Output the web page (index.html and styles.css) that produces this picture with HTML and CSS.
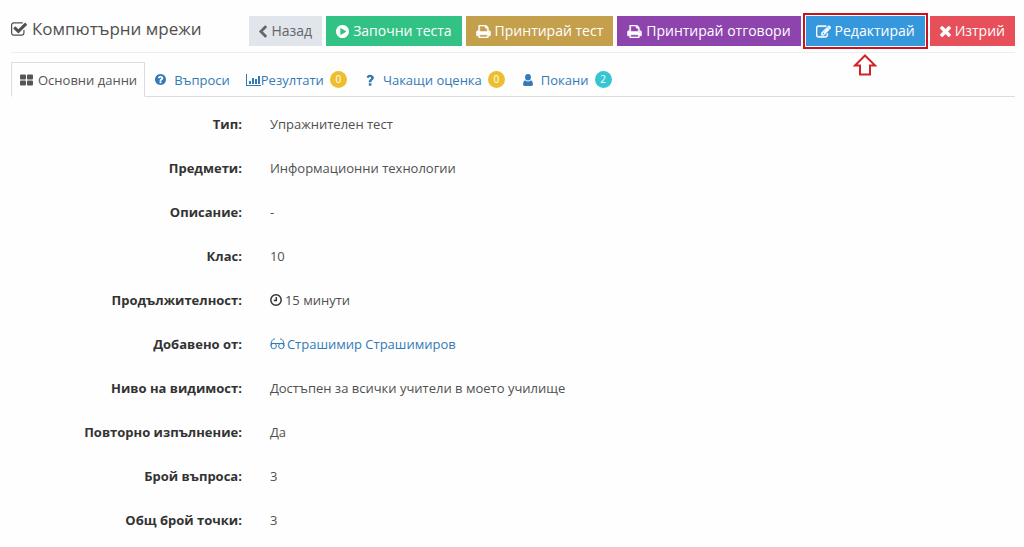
FILE: index.html
```html
<!DOCTYPE html>
<html lang="bg">
<head>
<meta charset="utf-8">
<title>Компютърни мрежи</title>
<link rel="stylesheet" href="styles.css">
</head>
<body>
<svg class="sprite" aria-hidden="true">
  <symbol id="print" viewBox="64 128 1664 1536"><path d="M448 1536h896v-256h-896v256zm0-640h896v-384h-160q-40 0-68-28t-28-68v-160h-640v640zm1152 64q0-26-19-45t-45-19-45 19-19 45 19 45 45 19 45-19 19-45zm128 0v416q0 13-9.500 22.500t-22.500 9.500h-224v160q0 40-28 68t-68 28h-960q-40 0-68-28t-28-68v-160h-224q-13 0-22.500-9.500t-9.500-22.500v-416q0-79 56.500-135.500t135.500-56.500h64v-544q0-40 28-68t68-28h672q40 0 88 20t76 48l152 152q28 28 48 76t20 88v256h64q79 0 135.500 56.500t56.500 135.500z"/></symbol>
</svg>
<main class="page">
  <header class="header">
    <h1 class="title">
      <svg class="icon icon-title" viewBox="64 128 1664 1408" aria-hidden="true"><path d="M1472 930v318q0 119-84.500 203.500t-203.500 84.500h-832q-119 0-203.500-84.500t-84.500-203.500v-832q0-119 84.500-203.500t203.500-84.500h832q63 0 117 25 15 7 18 23 3 17-9 29l-49 49q-10 10-23 10-3 0-9-2-23-6-45-6h-832q-66 0-113 47t-47 113v832q0 66 47 113t113 47h832q66 0 113-47t47-113v-254q0-13 9-22l64-64q10-10 23-10 6 0 12 3 20 8 20 29zm231-489l-814 814q-24 24-57 24t-57-24l-430-430q-24-24-24-57t24-57l110-110q24-24 57-24t57 24l263 263 647-647q24-24 57-24t57 24l110 110q24 24 24 57t-24 57z"/></svg>
      Компютърни мрежи
    </h1>
    <div class="actions">
      <button type="button" class="btn btn-back"><svg class="icon icon-narrow" viewBox="410 26 1036 1612" aria-hidden="true"><path d="M1427 301l-531 531 531 531q19 19 19 45t-19 45l-166 166q-19 19-45 19t-45-19l-742-742q-19-19-19-45t19-45l742-742q19-19 45-19t45 19l166 166q19 19 19 45t-19 45z"/></svg>Назад</button>
      <button type="button" class="btn btn-start"><svg class="icon" viewBox="128 128 1536 1536" aria-hidden="true"><path d="M896 128q209 0 385.500 103t279.500 279.500 103 385.500-103 385.500-279.500 279.500-385.500 103-385.500-103-279.500-279.500-103-385.500 103-385.500 279.500-279.500 385.500-103zm384 823q32-18 32-55t-32-55l-544-320q-31-19-64-1-32 19-32 56v640q0 37 32 56 16 8 32 8 17 0 32-9z"/></svg>Започни теста</button>
      <button type="button" class="btn btn-print"><svg class="icon icon-wide icon-bold" aria-hidden="true"><use href="#print"/></svg>Принтирай тест</button>
      <button type="button" class="btn btn-answers"><svg class="icon icon-wide icon-bold" aria-hidden="true"><use href="#print"/></svg>Принтирай отговори</button>
      <div class="highlight">
        <button type="button" class="btn btn-edit"><svg class="icon icon-wide icon-bold" viewBox="0 128 1784 1408" aria-hidden="true"><path d="M888 1184l116-116-152-152-116 116v56h96v96h56zm440-720q-16-16-33 1l-350 350q-17 17-1 33t33-1l350-350q17-17 1-33zm80 594v190q0 119-84.500 203.500t-203.500 84.500h-832q-119 0-203.500-84.500t-84.500-203.500v-832q0-119 84.500-203.500t203.500-84.500h832q63 0 117 25 15 7 18 23 3 17-9 29l-49 49q-14 14-32 8-23-6-45-6h-832q-66 0-113 47t-47 113v832q0 66 47 113t113 47h832q66 0 113-47t47-113v-126q0-13 9-22l64-64q15-15 35-7t20 29zm-96-738l288 288-672 672h-288v-288zm444 132l-92 92-288-288 92-92q28-28 68-28t68 28l152 152q28 28 28 68t-28 68z"/></svg>Редактирай</button>
        <svg class="pointer" viewBox="0 0 24 22" aria-hidden="true"><path d="M12 1.500 22 11.500H17V20.500H7V11.500H2Z"/></svg>
      </div>
      <button type="button" class="btn btn-delete"><svg class="icon icon-cross" viewBox="302 366 1188 1188" aria-hidden="true"><path d="M1490 1322q0 40-28 68l-136 136q-28 28-68 28t-68-28l-294-294-294 294q-28 28-68 28t-68-28l-136-136q-28-28-28-68t28-68l294-294-294-294q-28-28-28-68t28-68l136-136q28-28 68-28t68 28l294 294 294-294q28-28 68-28t68 28l136 136q28 28 28 68t-28 68l-294 294 294 294q28 28 28 68z"/></svg>Изтрий</button>
    </div>
  </header>

  <nav class="tabs">
    <a class="tab active" href="#main" aria-current="page"><svg class="icon" viewBox="0 0 13 12" aria-hidden="true"><rect y="1" width="6" height="5" rx="1"/><rect x="7" y="1" width="6" height="5" rx="1"/><rect y="7" width="6" height="5" rx="1"/><rect x="7" y="7" width="6" height="5" rx="1"/></svg>Основни данни</a>
    <a class="tab" href="#questions"><svg class="icon icon-help" viewBox="128 128 1536 1536" aria-hidden="true"><path d="M1024 1376v-192q0-14-9-23t-23-9h-192q-14 0-23 9t-9 23v192q0 14 9 23t23 9h192q14 0 23-9t9-23zm256-672q0-88-55.500-163t-138.500-116-170-41q-243 0-371 213-15 24 8 42l132 100q7 6 19 6 16 0 25-12 53-68 86-92 34-24 86-24 48 0 85.500 26t37.500 59q0 38-20 61t-68 45q-63 28-115.500 86.500t-52.500 125.500v36q0 14 9 23t23 9h192q14 0 23-9t9-23q0-19 21.500-49.500t54.500-49.500q32-18 49-28.500t46-35 44.500-48 28-60.500 12.500-81zm384 192q0 209-103 385.500t-279.500 279.500-385.500 103-385.500-103-279.500-279.500-103-385.500 103-385.500 279.500-279.500 385.500-103 385.500 103 279.500 279.500 103 385.500z"/></svg>Въпроси</a>
    <a class="tab tab-tight" href="#results"><svg class="icon icon-chart" viewBox="0 0 15 12" aria-hidden="true"><path d="M0 0h1v11h14v1H0zM3 7h2v3H3zM6 4h2v6H6zM9 5h2v5H9zM12 2h2v8h-2z"/></svg>Резултати<span class="badge">0</span></a>
    <a class="tab" href="#pending"><svg class="icon icon-question" viewBox="0 0 10 12" aria-hidden="true"><path d="M1.500 3.200C2.200 1.500 3.500.7 5.100.7 7.200.7 8.900 2 8.900 3.800 8.900 6 6.400 6.200 6.400 7.700V8.200H3.800V7.400C3.800 5.300 6.100 5.100 6.100 3.900 6.100 3.300 5.600 2.900 5 2.900 4.300 2.900 3.900 3.300 3.400 4.300ZM3.800 9.200H6.400V11.700H3.800Z"/></svg>Чакащи оценка<span class="badge">0</span></a>
    <a class="tab" href="#invites"><svg class="icon icon-user" viewBox="0 0 10 12" aria-hidden="true"><ellipse cx="5" cy="3.300" rx="2.900" ry="3.300"/><path d="M2 6.200Q5 8.800 8 6.200 10 7 10 10.300 10 12 8.300 12H1.700Q0 12 0 10.300 0 7 2 6.200Z"/></svg>Покани<span class="badge badge-info">2</span></a>
  </nav>

  <dl class="details">
    <dt>Тип:</dt><dd>Упражнителен тест</dd>
    <dt>Предмети:</dt><dd>Информационни технологии</dd>
    <dt>Описание:</dt><dd>-</dd>
    <dt>Клас:</dt><dd>10</dd>
    <dt>Продължителност:</dt><dd><svg class="icon icon-clock" viewBox="0 0 12 12" aria-hidden="true"><path d="M6 .8a5.200 5.200 0 1 0 0 10.400A5.200 5.200 0 0 0 6 .8ZM6.300 3v3.500H3.800"/></svg>15 минути</dd>
    <dt>Добавено от:</dt><dd><a class="link" href="#author"><svg class="icon icon-glasses" viewBox="0 0 15 12" aria-hidden="true"><path d="M5 1C2 1 1 3.500 1 8M10 1c3 0 4 2.500 4 7M1 5.500h13"/><circle cx="3.700" cy="8" r="2.700"/><circle cx="11.300" cy="8" r="2.700"/></svg>Страшимир Страшимиров</a></dd>
    <dt>Ниво на видимост:</dt><dd>Достъпен за всички учители в моето училище</dd>
    <dt>Повторно изпълнение:</dt><dd>Да</dd>
    <dt>Брой въпроса:</dt><dd>3</dd>
    <dt>Общ брой точки:</dt><dd>3</dd>
  </dl>
</main>
</body>
</html>
```
FILE: styles.css
```css
* {
  box-sizing: border-box;
}

body {
  margin: 0;
  background: #fefefe;
  color: #505050;
  font-family: "Open Sans", "Noto Sans", sans-serif;
  font-size: 13px;
  line-height: 20px;
}

.sprite {
  display: none;
}

.page {
  padding: 16px 9px 0 11px;
}

.header {
  display: flex;
  justify-content: space-between;
  align-items: flex-start;
  padding-bottom: 6px;
  border-bottom: 1px solid #eeeeee;
}

.title {
  display: flex;
  align-items: center;
  gap: 5px;
  margin: 0;
  font-size: 17px;
  font-weight: 400;
  line-height: 26px;
  white-space: nowrap;
}

.icon {
  flex: none;
  width: 13px;
  height: 13px;
  fill: currentColor;
}

.icon-title {
  width: 16px;
  height: 14px;
}

.icon-narrow {
  width: 8px;
}

.icon-wide {
  width: 15px;
}

.icon-bold {
  stroke: currentColor;
  stroke-width: 60;
}

.icon-cross {
  width: 11px;
  height: 11px;
}

.actions {
  display: flex;
  gap: 4px;
}

.btn {
  display: flex;
  align-items: center;
  gap: 4px;
  height: 30px;
  padding: 0 10px;
  border: 0;
  color: #ffffff;
  font: inherit;
  font-size: 14px;
  white-space: nowrap;
  cursor: pointer;
}

.btn-back {
  background: #e1e5ec;
  color: #666666;
}

.btn-start {
  background: #32c285;
}

.btn-print {
  background: #c49f4c;
}

.btn-answers {
  background: #8e44ad;
}

.btn-edit {
  background: #3598dc;
  outline: 2px solid #c8141e;
  outline-offset: 1px;
}

.btn-delete {
  background: #e7505a;
}

.highlight {
  position: relative;
  margin: 0 1px;
}

.pointer {
  position: absolute;
  top: 38px;
  left: 50%;
  width: 24px;
  height: 22px;
  margin-left: -12px;
  fill: #ffffff;
  stroke: #d2232a;
  stroke-width: 2;
}

.tabs {
  display: flex;
  margin-top: 9px;
  border-bottom: 1px solid #dddddd;
}

.tab {
  display: flex;
  align-items: center;
  gap: 6px;
  height: 35px;
  margin-bottom: -1px;
  padding: 0 7px;
  border: 1px solid transparent;
  color: #337ab7;
  text-decoration: none;
  white-space: nowrap;
}

.tab.active {
  gap: 5px;
  padding: 0 7px 0 8px;
  border-color: #dddddd;
  border-bottom-color: #fefefe;
  background: #fefefe;
  color: #555555;
}

.tab-tight {
  gap: 0;
}

.tab-tight .badge {
  margin-left: 6px;
}

.icon-help {
  width: 11px;
  height: 11px;
  margin: 0 2px;
}

.icon-chart {
  width: 15px;
  height: 12px;
}

.icon-question,
.icon-user {
  width: 10px;
  height: 12px;
  margin: 0 2px;
}

.badge {
  width: 17px;
  height: 17px;
  border-radius: 50%;
  background: #edbf2f;
  color: #ffffff;
  font-size: 10px;
  line-height: 17px;
  text-align: center;
}

.badge-info {
  background: #36c6d3;
}

.details {
  display: grid;
  grid-template-columns: 23% 1fr;
  column-gap: 28px;
  row-gap: 24px;
  margin: 17px 0 14px;
}

.details dt {
  color: #333333;
  font-weight: 700;
  text-align: right;
}

.details dd {
  display: flex;
  align-items: center;
  gap: 3px;
  margin: 0;
}

.icon-clock {
  width: 12px;
  height: 12px;
  fill: none;
  stroke: #333333;
  stroke-width: 1.500;
}

.link {
  display: flex;
  align-items: center;
  gap: 2px;
  color: #337ab7;
  text-decoration: none;
}

.icon-glasses {
  width: 15px;
  height: 12px;
  fill: none;
  stroke: currentColor;
}
```
